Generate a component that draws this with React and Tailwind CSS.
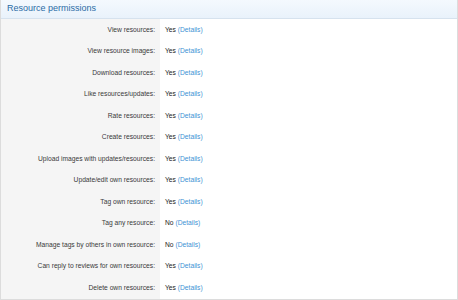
import React from "react";

const rows = [
  ["View resources:", "Yes"],
  ["View resource images:", "Yes"],
  ["Download resources:", "Yes"],
  ["Like resources/updates:", "Yes"],
  ["Rate resources:", "Yes"],
  ["Create resources:", "Yes"],
  ["Upload images with updates/resources:", "Yes"],
  ["Update/edit own resources:", "Yes"],
  ["Tag own resource:", "Yes"],
  ["Tag any resource:", "No"],
  ["Manage tags by others in own resource:", "No"],
  ["Can reply to reviews for own resources:", "Yes"],
  ["Delete own resources:", "Yes"],
];

export default function App() {
  return (
    <div className="w-[458px] h-[300px] bg-white overflow-hidden" style={{ fontFamily: '"Liberation Sans", Arial, sans-serif' }}>
      <div className="border-x border-b border-[#dcdcdc]">
        <div className="h-[19px] flex items-center px-[6px] bg-gradient-to-b from-[#f4f9fe] to-[#e9f2fb] border-b border-[#d6e2ee]">
          <span className="text-[9px] text-[#2b6ca6]">Resource permissions</span>
        </div>
        <div className="grid grid-cols-[159px_1fr]">
          {rows.map(([label, val]) => (
            <React.Fragment key={label}>
              <div className="h-[21.5px] flex items-center justify-end pr-[5px] bg-[#f5f5f5] text-[6.7px] text-[#3a3a3a]">
                {label}
              </div>
              <div className="h-[21.5px] flex items-center pl-[5px] text-[6.7px] text-[#222]">
                {val}&nbsp;<span className="text-[#4192d4]">(Details)</span>
              </div>
            </React.Fragment>
          ))}
        </div>
      </div>
    </div>
  );
}
